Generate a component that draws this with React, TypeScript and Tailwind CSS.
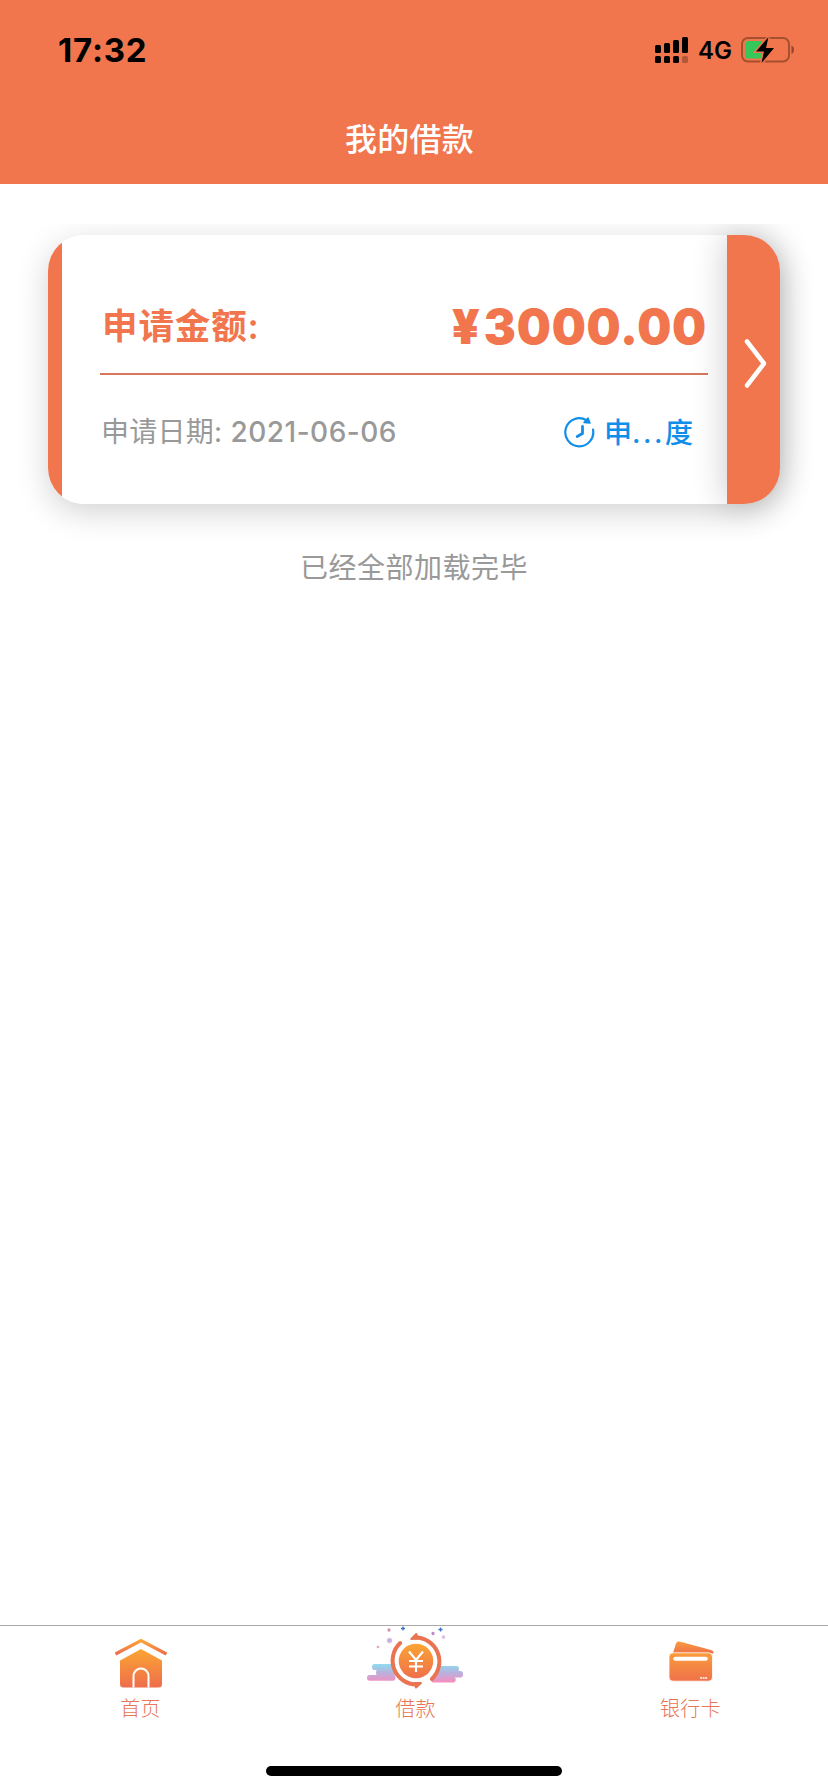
import React from "react";

const cjk = "font-['Inter','Noto_Sans_CJK_SC',sans-serif]";

function StatusBar() {
  return (
    <div className="flex h-[100px] items-center justify-between pl-[58px] pr-[33px] text-black">
      <span className="text-[33px] font-bold leading-[32px] tracking-[0.8px]">17:32</span>
      <div className="flex items-center">
        <svg width="34" height="28" viewBox="0 0 34 28" fill="currentColor">
          <rect x="0" y="9" width="6" height="8" rx="1.5" />
          <rect x="9" y="7" width="6" height="10" rx="1.5" />
          <rect x="18" y="4" width="6" height="13" rx="1.5" />
          <rect x="27" y="1" width="6" height="16" rx="1.5" />
          <rect x="0" y="20" width="6" height="7" rx="1.5" />
          <rect x="9" y="20" width="6" height="7" rx="1.5" />
          <rect x="18" y="20" width="6" height="7" rx="1.5" />
          <rect x="27" y="20" width="6" height="7" rx="1.5" opacity="0.25" />
        </svg>
        <span className="ml-[9px] w-[35px] whitespace-nowrap pt-[1px] text-[24px] font-semibold leading-[28px]">4G</span>
        <svg className="ml-[8px]" width="54" height="28" viewBox="0 0 54 28">
          <rect x="1" y="2" width="47" height="23.5" rx="6" fill="none" stroke="#a5502f" strokeWidth="2" />
          <path d="M50.500 9.500c3.300 1.200 3.300 7.300 0 8.500z" fill="#8f4630" />
          <rect x="4" y="5" width="18" height="17.500" rx="3" fill="#34c759" />
          <path d="M27.500 1 15 15.500h8L20.500 27 33 12h-8z" fill="#000" stroke="#f1754d" strokeWidth="3" paintOrder="stroke" />
        </svg>
      </div>
    </div>
  );
}

function HistoryIcon() {
  return (
    <svg width="32" height="32" viewBox="0 0 32 32" fill="none" stroke="#118eea" strokeWidth="2.2" strokeLinecap="round">
      <path d="M23.500 4.300A14 14 0 1 0 30 13.500" />
      <path d="M19.500 10.500V17.500L14.200 20.500" strokeWidth="2.800" strokeLinejoin="round" />
      <path d="M25 2 27 7l-6-.5z" fill="#118eea" strokeWidth="1.500" strokeLinejoin="round" />
    </svg>
  );
}

function LoanCard() {
  return (
    <div className="flex h-[269px] w-[732px] rounded-[36px] shadow-[0_8px_32px_rgba(0,0,0,0.18)]">
      <div className="flex min-w-0 flex-1 overflow-hidden rounded-l-[36px] bg-white">
        <div className="w-[13.500px] shrink-0 bg-[#f1754d]" />
        <div className="ml-[38.500px] flex w-[608px] shrink-0 flex-col">
          <div className="flex h-[140px] items-end justify-between border-b-2 border-[#d8775c] pb-[19px] pl-[2px] pr-[1px] text-[#f1754d]">
            <span className="text-[35.500px] font-semibold leading-[54px] tracking-[0.900px]">申请金额:</span>
            <span className="text-[48px] font-black leading-[54px] tracking-[0.800px]">
              <span className="mr-[3px]">¥</span>3000.00
            </span>
          </div>
          <div className="flex h-[114px] items-center justify-between pl-[1px] pr-[15px]">
            <span className="whitespace-pre text-[28px] font-medium leading-[32px] tracking-[0.500px] text-[#999]">
              <span className="font-normal tracking-[0.250px]">申请日期: </span>2021-06-06
            </span>
            <span className="flex items-center gap-[9px] text-[28px] font-medium leading-[32px] text-[#118eea]">
              <HistoryIcon />
              <span className="whitespace-nowrap pt-[2px]">申<span className="tracking-[2.500px]">...</span>度</span>
            </span>
          </div>
        </div>
      </div>
      <div className="flex w-[53px] justify-center rounded-r-[36px] bg-[#f1754d] pl-[4px] pt-[103px] shadow-[0_0_34px_rgba(0,0,0,0.22)]">
        <svg width="24" height="52" viewBox="0 0 24 52" fill="none" stroke="#fff" strokeWidth="4.500" strokeLinecap="round" strokeLinejoin="round">
          <path d="M3 3.500 20 25.500 3 47.500" />
        </svg>
      </div>
    </div>
  );
}

function HomeIcon() {
  return (
    <svg width="54" height="64" viewBox="0 0 54 64">
      <defs>
        <linearGradient id="home" x1="0" y1="0" x2="0" y2="1">
          <stop offset="0" stopColor="#fba534" />
          <stop offset="1" stopColor="#ee6d4b" />
        </linearGradient>
      </defs>
      <path d="M1.500 18 27 4.500 52.500 18" fill="none" stroke="url(#home)" strokeWidth="3.200" />
      <path d="M27 13 48 24.500v23.500a3.500 3.500 0 0 1-3.500 3.500H9.500a3.500 3.500 0 0 1-3.500-3.500V24.500z" fill="url(#home)" />
      <path d="M19.500 51.500V40a7.500 7.500 0 0 1 15 0V51.500" fill="none" stroke="#fff" strokeWidth="2" />
    </svg>
  );
}

function LoanIcon() {
  return (
    <svg width="98" height="64" viewBox="0 0 98 64">
      <defs>
        <linearGradient id="cloud" gradientUnits="userSpaceOnUse" x1="0" y1="38" x2="0" y2="56">
          <stop offset="0" stopColor="#8fdcf0" />
          <stop offset="0.5" stopColor="#b9b0dc" />
          <stop offset="1" stopColor="#f58fbe" />
        </linearGradient>
        <linearGradient id="coin" x1="0" y1="0" x2="0" y2="1">
          <stop offset="0" stopColor="#fba534" />
          <stop offset="1" stopColor="#ef6f4b" />
        </linearGradient>
      </defs>
      <g fill="url(#cloud)">
        <rect x="5" y="38" width="30" height="6" rx="2.800" />
        <rect x="9" y="43.500" width="28" height="6" rx="2.500" />
        <rect x="0" y="49" width="28.500" height="5.800" rx="2.800" />
        <rect x="66" y="40" width="26" height="5.800" rx="2.800" />
        <rect x="62" y="45" width="34" height="6.500" rx="2.800" />
        <rect x="64" y="50.800" width="24.700" height="5.700" rx="2.800" />
      </g>
      <circle cx="49" cy="35" r="23.500" fill="#fff" />
      <circle cx="49" cy="35" r="17.300" fill="url(#coin)" />
      <path d="M42 25.500l7 8.500 7-8.500M42 35h14M42 40.500h14M49 35v11" fill="none" stroke="#fff" strokeWidth="2.200" />
      <g fill="none" stroke="#ea7351" strokeWidth="4" strokeLinecap="round">
        <path d="M33.200 17A24 24 0 0 0 50 58.500" />
        <path d="M48 11.500A24 24 0 0 1 64.800 53" />
      </g>
      <path d="M44.300 13 49.300 8 51 12.500zM54 57 49 61.500 47.300 57z" fill="#ea7351" stroke="#ea7351" strokeWidth="2" strokeLinejoin="round" />
      <g fill="none" strokeWidth="1.300">
        <path d="M36 .500v4M34 2.500h4M73.500 1.500v4M71.500 3.500h4" stroke="#3973c1" />
        <circle cx="22" cy="4" r="1" stroke="#d88bad" />
        <circle cx="66" cy="7.500" r="1" stroke="#b886c8" />
        <circle cx="22.500" cy="14.500" r="2" fill="#c6a7dc" stroke="#d8bde6" />
        <circle cx="76.500" cy="11" r="1.200" fill="#d4b2df" stroke="#ddc2e8" />
        <circle cx="11" cy="21" r=".7" stroke="#e0aab9" />
      </g>
    </svg>
  );
}

function CardIcon() {
  return (
    <svg width="46" height="64" viewBox="0 0 46 64">
      <defs>
        <linearGradient id="bankcard" x1="0" y1="0" x2="0" y2="1">
          <stop offset="0" stopColor="#fa9c3b" />
          <stop offset="1" stopColor="#ef714b" />
        </linearGradient>
      </defs>
      <path d="M5 17 8 7.500a3 3 0 0 1 3.500-2L43 14a3 3 0 0 1 2.500 3.500z" fill="url(#bankcard)" />
      <rect x="1" y="16.800" width="43.500" height="28.400" rx="4" fill="url(#bankcard)" stroke="#fff" strokeWidth=".8" />
      <rect x="5.300" y="20.800" width="34.500" height="4" rx="2" fill="#fff" />
      <path d="M32 42h7.500" stroke="#fff" strokeWidth="1.500" strokeDasharray="2 .6" />
    </svg>
  );
}

function Tab({ label, icon }: { label: string; icon: React.ReactNode }) {
  return (
    <div className="flex flex-col items-center">
      {icon}
      <span className="mt-[5px] text-[20px] font-light leading-[28px] tracking-[0.300px] text-[#e87555]">{label}</span>
    </div>
  );
}

export default function App() {
  return (
    <div className={`${cjk} flex h-[1792px] w-[828px] flex-col bg-white`}>
      <header className="h-[184px] bg-[#f1754d]">
        <StatusBar />
        <h1 className="mt-[16px] pr-[9px] text-center text-[32px] font-medium leading-[48px] tracking-[0.300px] text-white">我的借款</h1>
      </header>
      <main className="mt-[40px] flex flex-1 flex-col items-center overflow-hidden pt-[11px]">
        <LoanCard />
        <p className="mt-[46px] text-[28px] leading-[36px] tracking-[0.500px] text-[#999]">已经全部加载完毕</p>
      </main>
      <nav className="flex h-[167px] flex-col items-center border-t border-[#aaa]">
        <div className="grid w-full grid-cols-3 pl-[3px]">
          <Tab label="首页" icon={<div className="-mb-[10px] pt-[10px]"><HomeIcon /></div>} />
          <Tab label="借款" icon={<LoanIcon />} />
          <Tab label="银行卡" icon={<div className="-mb-[10px] pt-[10px]"><CardIcon /></div>} />
        </div>
        <div className="mb-[16px] mt-auto h-[10px] w-[296px] rounded-full bg-black" />
      </nav>
    </div>
  );
}
